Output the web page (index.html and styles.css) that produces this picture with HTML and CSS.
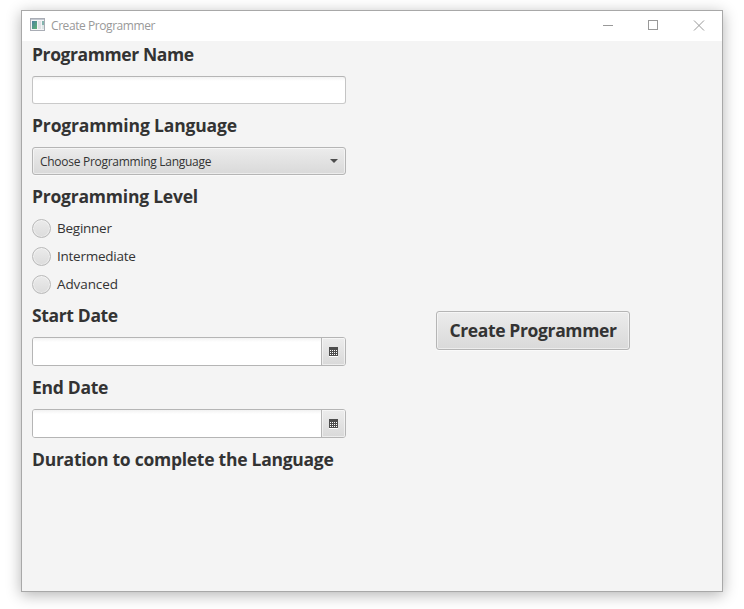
FILE: index.html
```html
<!DOCTYPE html>
<html lang="en">
<head>
<meta charset="utf-8">
<title>Create Programmer</title>
<link rel="stylesheet" href="styles.css">
</head>
<body>
<div class="window">
  <header class="titlebar">
    <svg class="app-icon" width="16" height="14" viewBox="0 0 16 14">
      <defs>
        <linearGradient id="pane" x1="0" y1="0" x2="1" y2="1">
          <stop offset="0" stop-color="#4a7f9f"/><stop offset="1" stop-color="#5fb474"/>
        </linearGradient>
      </defs>
      <rect x=".5" y=".5" width="14" height="12" fill="#f4f4f6" stroke="#a9adb5"/>
      <path d="M1 1.5h13" stroke="#c3c8d0"/>
      <rect x="2" y="3" width="5" height="8" fill="url(#pane)"/>
      <rect x="8" y="3" width="3" height="8" fill="#dfe1e5"/>
      <rect x="12" y="3" width="2" height="4" fill="#84b4ae"/>
      <rect x="12" y="7" width="2" height="4" fill="#dce5e5"/>
    </svg>
    <span class="title">Create Programmer</span>
    <div class="controls">
      <svg width="46" height="30" viewBox="0 0 46 30"><path d="M19 14.5h10"/></svg>
      <svg width="46" height="30" viewBox="0 0 46 30"><rect x="18.5" y="9.5" width="9" height="9"/></svg>
      <svg width="46" height="30" viewBox="0 0 46 30"><path d="M18 9.5l10 10M28 9.5l-10 10"/></svg>
    </div>
  </header>
  <main class="content">
    <form class="form">
      <h2 class="heading h-name">Programmer Name</h2>
      <div class="field text-field"></div>
      <h2 class="heading h-lang">Programming Language</h2>
      <div class="field choice"><span class="choice-text">Choose Programming Language</span><span class="arrow"></span></div>
      <h2 class="heading h-level">Programming Level</h2>
      <div class="radios">
        <label class="radio"><span class="dot"></span><span class="radio-text">Beginner</span></label>
        <label class="radio"><span class="dot"></span><span class="radio-text">Intermediate</span></label>
        <label class="radio"><span class="dot"></span><span class="radio-text r-adv">Advanced</span></label>
      </div>
      <h2 class="heading h-start">Start Date</h2>
      <div class="field date">
        <div class="date-input"></div>
        <div class="date-button">
          <svg width="9" height="10" viewBox="0 0 9 10" shape-rendering="crispEdges"><path fill="#fff" d="M0 9h9v1H0z"/><path fill="#4d4d4d" d="M0 0h9v9H0z"/><path stroke="#fff" stroke-dasharray="1 1" d="M1 3.5h7M1 5.5h7M1 7.5h7"/></svg>
        </div>
      </div>
      <h2 class="heading">End Date</h2>
      <div class="field date">
        <div class="date-input"></div>
        <div class="date-button">
          <svg width="9" height="10" viewBox="0 0 9 10" shape-rendering="crispEdges"><path fill="#fff" d="M0 9h9v1H0z"/><path fill="#4d4d4d" d="M0 0h9v9H0z"/><path stroke="#fff" stroke-dasharray="1 1" d="M1 3.5h7M1 5.5h7M1 7.5h7"/></svg>
        </div>
      </div>
      <h2 class="heading h-duration">Duration to complete the Language</h2>
    </form>
    <button class="create" type="button">Create Programmer</button>
  </main>
</div>
</body>
</html>
```
FILE: styles.css
```css
* { box-sizing: border-box; }
body {
  margin: 0;
  height: 609px;
  padding: 10px 21px;
  overflow: hidden;
  background: #fff;
  color: #333;
  font-family: "Open Sans", "Noto Sans", sans-serif;
}
.window {
  width: 702px;
  height: 582px;
  border: 1px solid #a8a8a8;
  background: #f4f4f4;
  box-shadow: 0 3px 14px rgba(0, 0, 0, .3);
}
.titlebar {
  display: flex;
  align-items: center;
  height: 30px;
  padding-left: 8px;
  background: #fff;
}
.app-icon { margin-bottom: 2px; }
.title {
  margin: 0 0 1px 5px;
  font-size: 12px;
  letter-spacing: -.43px;
  color: #999;
}
.controls { display: flex; margin-left: auto; }
.controls svg { fill: none; stroke: #999; }
.content {
  display: flex;
  align-items: flex-start;
  padding: 2px 10px 0;
}
.form { width: 314px; }
.heading {
  height: 24px;
  margin: 0 0 9px;
  font-size: 17.5px;
  line-height: 23px;
  font-weight: 700;
  letter-spacing: -.28px;
  white-space: nowrap;
}
.h-name { letter-spacing: -.4px; }
.h-lang { letter-spacing: -.15px; }
.h-level { letter-spacing: -.22px; }
.h-start { letter-spacing: -.35px; }
.h-duration { letter-spacing: -.26px; }
.field {
  height: 28px;
  margin-bottom: 10px;
  border: 1px solid #b5b5b5;
  border-radius: 3px;
}
.text-field {
  border-color: #b5b5b5 #c4c4c4 #cacaca;
  background: linear-gradient(#f2f2f2, #fff 4px);
}
.choice {
  display: flex;
  align-items: center;
  justify-content: space-between;
  padding: 0 7px;
  background: linear-gradient(#ececec, #d9d9d9);
  box-shadow: inset 0 0 0 1px rgba(255, 255, 255, .5), 0 1px #fafafa;
}
.choice-text { font-size: 12px; letter-spacing: -.28px; }
.arrow {
  border: 4px solid transparent;
  border-top-color: #4d4d4d;
  border-bottom: 0;
}
.radios {
  display: grid;
  gap: 9px;
  padding: 1px 0 10px;
}
.radio {
  display: flex;
  align-items: center;
  height: 19px;
  gap: 6px;
  font-size: 13.5px;
  letter-spacing: -.25px;
}
.radio-text { line-height: 19px; }
.r-adv { letter-spacing: -.1px; }
.dot {
  width: 19px;
  height: 19px;
  border: 1px solid #b9b9b9;
  border-radius: 50%;
  background: linear-gradient(#ebebeb, #dcdcdc);
  box-shadow: inset 0 0 0 1px rgba(255, 255, 255, .4);
}
.date {
  display: flex;
  height: 29px;
  background: #fff;
  overflow: hidden;
}
.date-input { flex: 1; background: linear-gradient(#f2f2f2, #fff 4px); }
.date-button {
  display: flex;
  align-items: center;
  justify-content: center;
  width: 24px;
  padding-right: 1px;
  border-left: 1px solid #b5b5b5;
  background: linear-gradient(#ececec, #d9d9d9);
  box-shadow: inset 0 0 0 1px rgba(255, 255, 255, .5);
}
.create {
  width: 194px;
  height: 39px;
  margin: 268px 0 0 90px;
  padding: 0 0 1px;
  border: 1px solid #b5b5b5;
  border-radius: 3px;
  background: linear-gradient(#ececec, #d9d9d9);
  box-shadow: inset 0 0 0 1px rgba(255, 255, 255, .5), 0 1px #fafafa;
  color: #333;
  font: 700 17.5px/23px "Open Sans", "Noto Sans", sans-serif;
  letter-spacing: -.36px;
  white-space: nowrap;
}
```
